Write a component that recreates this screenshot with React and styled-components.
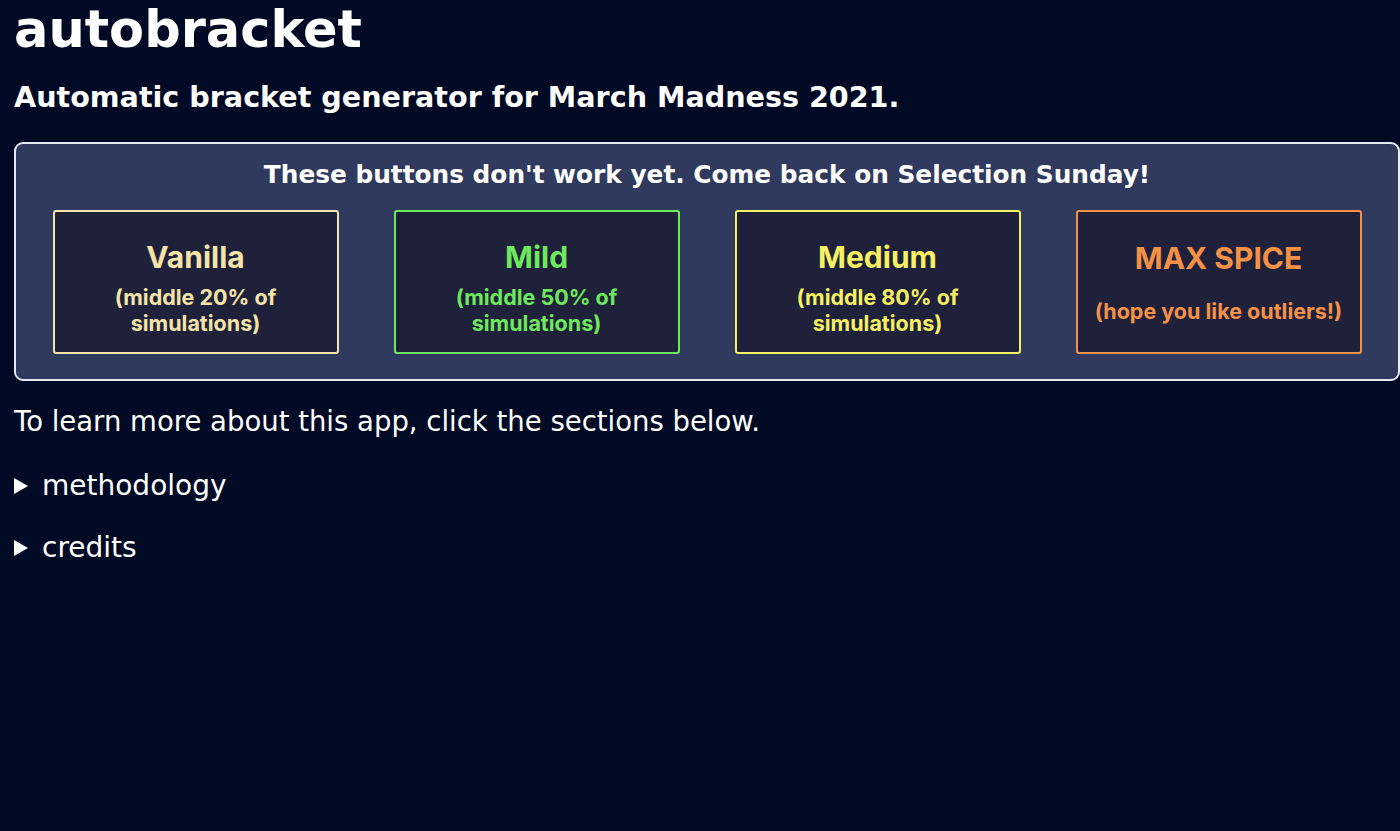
import React from "react"
import styled, { createGlobalStyle } from "styled-components"

const GlobalStyle = createGlobalStyle`
  html, body {
    margin: 0;
    padding: 0;
    background: #010a25;
    color: #ffffff;
    font-family: "DejaVu Sans", "Noto Sans", sans-serif;
  }
`

const modes = [
  { title: "Vanilla", sub: "(middle 20% of simulations)", color: "#f5e4a8" },
  { title: "Mild", sub: "(middle 50% of simulations)", color: "#6ee85c" },
  { title: "Medium", sub: "(middle 80% of simulations)", color: "#f6f062" },
  { title: "MAX SPICE", sub: "(hope you like outliers!)", color: "#f59146", spread: true },
]

const App = () => {
  return (
    <Page>
      <GlobalStyle />
      <Title>autobracket</Title>
      <Subtitle>Automatic bracket generator for March Madness 2021.</Subtitle>
      <Panel>
        <PanelHeading>These buttons don't work yet. Come back on Selection Sunday!</PanelHeading>
        <ButtonRow>
          {modes.map((mode) => (
            <ModeButton key={mode.title} $color={mode.color} $spread={mode.spread}>
              <ModeTitle>{mode.title}</ModeTitle>
              <ModeSub>{mode.sub}</ModeSub>
            </ModeButton>
          ))}
        </ButtonRow>
      </Panel>
      <Intro>To learn more about this app, click the sections below.</Intro>
      <Section>
        <Summary>methodology</Summary>
      </Section>
      <Section>
        <Summary>credits</Summary>
      </Section>
    </Page>
  )
}

export default App

const Page = styled.div`
  padding: 0 0 0 14px;
  min-height: 831px;
  box-sizing: border-box;
`

const Title = styled.h1`
  margin: 0;
  font-size: 51px;
  line-height: 60px;
  font-weight: 700;
`

const Subtitle = styled.h2`
  margin: 19px 0 0;
  font-size: 28.6px;
  line-height: 36px;
  font-weight: 700;
`

const Panel = styled.div`
  margin-top: 27px;
  background: #2f3a5e;
  border: 2px solid #e8ebf2;
  border-radius: 9px;
  padding: 14px 0 25px;
`

const PanelHeading = styled.h3`
  margin: 0;
  text-align: center;
  font-size: 24.8px;
  line-height: 34px;
  font-weight: 700;
`

const ButtonRow = styled.div`
  display: flex;
  justify-content: center;
  gap: 55px;
  margin-top: 18px;
`

const ModeButton = styled.button`
  width: 286px;
  height: 144px;
  box-sizing: border-box;
  background: #1e2139;
  border: 2px solid ${(p) => p.$color};
  border-radius: 3px;
  color: ${(p) => p.$color};
  font-family: Inter, "Liberation Sans", sans-serif;
  display: flex;
  flex-direction: column;
  align-items: center;
  justify-content: center;
  gap: ${(p) => (p.$spread ? "23px" : "10px")};
  padding: ${(p) => (p.$spread ? "0 10px" : "12px 10px 0")};
  cursor: pointer;
`

const ModeTitle = styled.span`
  font-size: 30px;
  line-height: 34px;
  font-weight: 700;
`

const ModeSub = styled.span`
  font-size: 21.5px;
  line-height: 26px;
  font-weight: 700;
`

const Intro = styled.p`
  margin: 22px 0 0;
  font-size: 27.5px;
  line-height: 36px;
`

const Section = styled.details`
  margin-top: 29px;
  font-size: 28px;
  line-height: 36px;

  & + & {
    margin-top: 26px;
  }
`

const Summary = styled.summary`
  list-style: none;
  display: flex;
  align-items: center;
  cursor: pointer;

  &::-webkit-details-marker {
    display: none;
  }

  &::before {
    content: "";
    flex-shrink: 0;
    box-sizing: content-box;
    width: 0;
    height: 0;
    border-top: 8px solid transparent;
    border-bottom: 8px solid transparent;
    border-left: 14px solid #ffffff;
    margin-right: 14px;
  }
`
